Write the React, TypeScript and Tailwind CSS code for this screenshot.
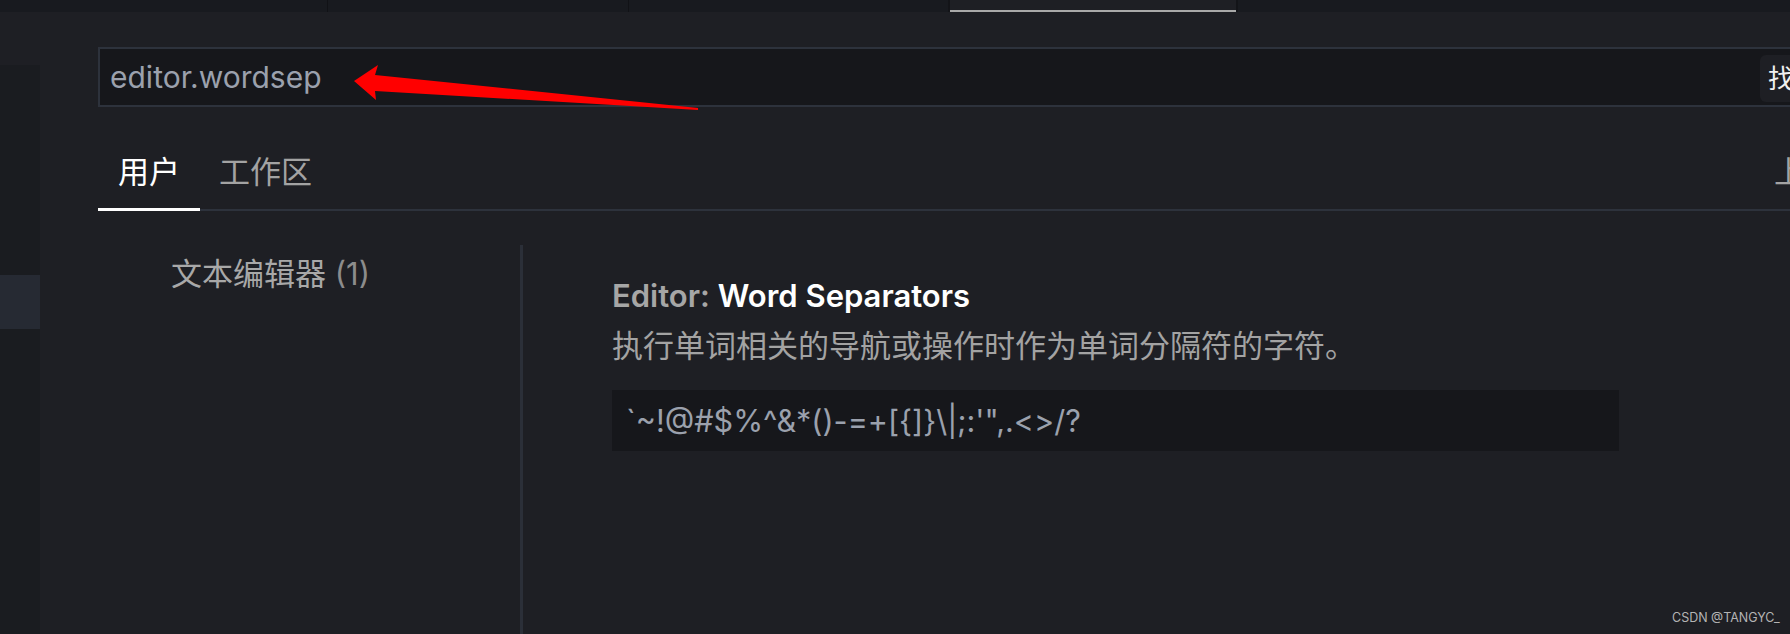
import React from "react";

const FONT = { fontFamily: "Inter, 'Noto Sans CJK SC', sans-serif" };

export default function App() {
  return (
    <div
      className="relative w-[1790px] h-[634px] overflow-hidden bg-[#1e1f24] flex flex-col"
      style={FONT}
    >
      {/* top tab strip */}
      <div className="h-[12px] shrink-0 flex bg-[#181a1f]">
        <div className="w-[327px]" />
        <div className="w-[1px] bg-[#111216]" />
        <div className="w-[300px]" />
        <div className="w-[1px] bg-[#111216]" />
        <div className="w-[319px]" />
        <div className="w-[290px] bg-[#1e1f24] border-x-2 border-[#131418] flex flex-col justify-end">
          <div className="h-[2px] bg-[#a9a9a9]" />
        </div>
        <div className="flex-1" />
      </div>

      <div className="flex flex-1 min-h-0">
        {/* left strip */}
        <div className="w-[40px] shrink-0 pt-[53px] flex flex-col">
          <div className="flex-1 bg-[#1a1c20] pt-[210px]">
            <div className="h-[54px] bg-[#262a33]" />
          </div>
        </div>

        {/* main */}
        <div className="flex-1 min-w-0 pt-[35px] pl-[58px] flex flex-col">
          {/* search input */}
          <div className="w-[1760px] h-[60px] shrink-0 border-2 border-[#2d323c] bg-[#16171b] flex items-center">
            <div className="w-[1660px] shrink-0 pl-[10px] text-[30px] leading-[36px] text-[#9ba1ad]">
              editor.wordsep
            </div>
            <div className="shrink-0 h-[47px] mt-[3px] rounded-[6px] bg-[#1e1f24] px-[8px] flex items-center text-[26px] text-[#f0f0f0] whitespace-nowrap">
              找到 1 个设置
            </div>
          </div>

          {/* tabs */}
          <div className="w-[1692px] shrink-0 mt-[47px] flex border-b-2 border-[#2d323c]">
            <div className="relative px-[20px] pb-[19px] text-[31px] leading-[36px] text-white">
              用户
              <span className="absolute left-0 right-0 -bottom-[2px] h-[3px] bg-white" />
            </div>
            <div className="px-[19px] pb-[19px] text-[31px] leading-[36px] text-[#a3a3a3]">
              工作区
            </div>
            <div className="flex-1" />
            <div className="w-[16px] overflow-hidden">
              <div className="text-[31px] leading-[36px] text-[#a3a3a3] whitespace-nowrap">
                上次同步
              </div>
            </div>
          </div>

          {/* body */}
          <div className="flex flex-1 min-h-0">
            <div className="w-[422px] shrink-0 pl-[73px] pt-[45px]">
              <div className="text-[31px] leading-[36px] text-[#a8a8a8] whitespace-nowrap">
                文本编辑器 <span className="text-[#8c8c8c]">(1)</span>
              </div>
            </div>
            <div className="w-[3px] shrink-0 mt-[34px] bg-[#2b2f38]" />
            <div className="flex-1 min-w-0 pl-[89px] pt-[67px]">
              <div className="text-[31px] leading-[36px] font-semibold whitespace-nowrap">
                <span className="text-[#a6a6a6]">Editor: </span>
                <span className="text-white">Word Separators</span>
              </div>
              <div className="mt-[14px] text-[31px] leading-[36px] text-[#a3a3a3] whitespace-nowrap">
                执行单词相关的导航或操作时作为单词分隔符的字符。
              </div>
              <div className="mt-[26px] w-[1007px] h-[61px] bg-[#16171b] flex items-center pl-[14px] text-[30.5px] text-[#9ba1ad] whitespace-nowrap">
                {"`~!@#$%^&*()-=+[{]}\\|;:'\",.<>/?"}
              </div>
            </div>
          </div>
        </div>
      </div>

      {/* red annotation arrow */}
      <svg
        className="absolute left-0 top-0 pointer-events-none"
        width="1790"
        height="634"
        viewBox="0 0 1790 634"
      >
        <polygon
          points="354,81 378,65 375,75 698,108 698,110 375,91 376,100"
          fill="#ff0000"
        />
      </svg>

      {/* watermark */}
      <div className="absolute left-[1672px] top-[610px] text-[12.5px] leading-[16px] text-[#b4b4b4] whitespace-nowrap">
        CSDN @TANGYC_
      </div>
    </div>
  );
}
